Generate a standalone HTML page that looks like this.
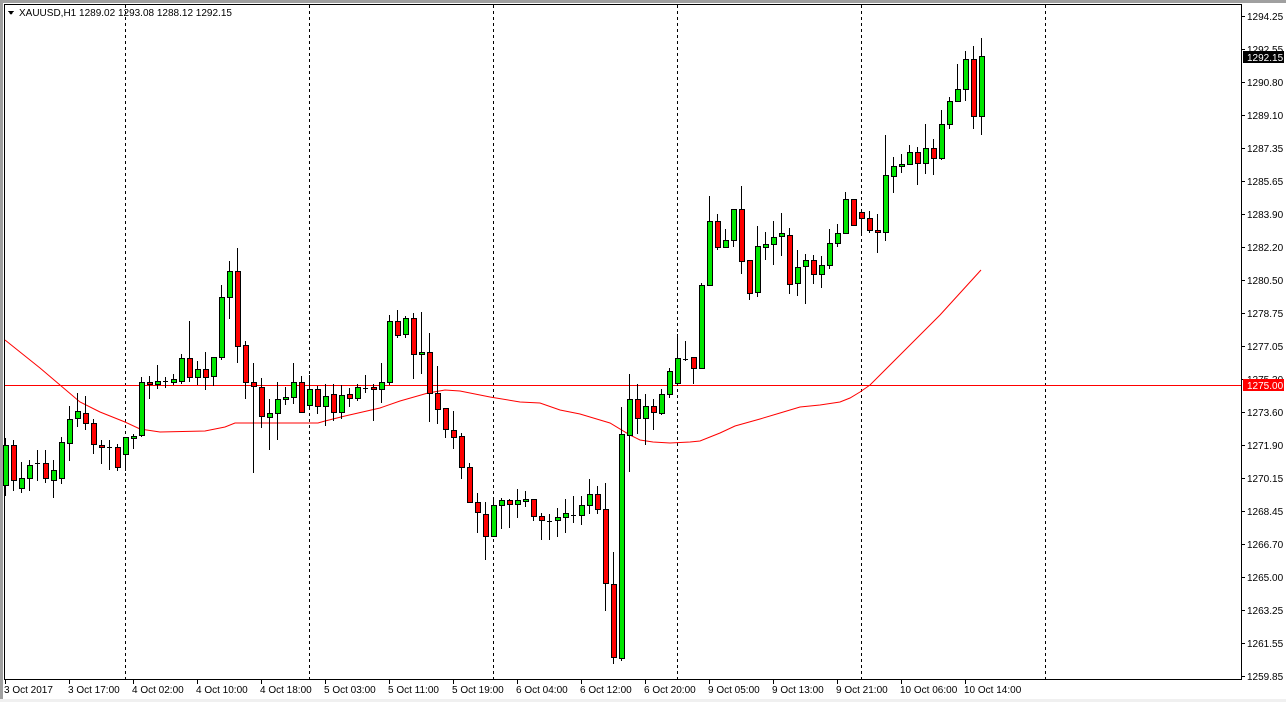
<!DOCTYPE html>
<html><head><meta charset="utf-8">
<style>
html,body{margin:0;padding:0;background:#f0f0f0;}
#c{position:absolute;left:0;top:0;width:1286px;height:702px;}
text{font-family:"Liberation Sans",sans-serif;font-size:10px;fill:#000;}
</style></head>
<body>
<svg id="c" width="1286" height="702" xmlns="http://www.w3.org/2000/svg" shape-rendering="crispEdges">
<rect x="0" y="0" width="1286" height="702" fill="#a0a0a0"/>
<rect x="3" y="3" width="1283" height="697" fill="#fff"/>
<rect x="0" y="699" width="1286" height="3" fill="#f0f0f0"/>
<line x1="4.5" y1="4" x2="4.5" y2="680" stroke="#000"/>
<line x1="4" y1="4.5" x2="1242" y2="4.5" stroke="#000"/>
<line x1="1241.5" y1="4" x2="1241.5" y2="680" stroke="#000"/>
<line x1="4" y1="679.5" x2="1242" y2="679.5" stroke="#000"/>
<g id="grid" stroke="#000" stroke-dasharray="3,3"></g>
<line x1="5" y1="385.5" x2="1241" y2="385.5" stroke="#ff0000"/>
<polyline fill="none" stroke="#ff0000" stroke-width="1" shape-rendering="auto" points="5,340 20,352 40,368 60,385 80,402 100,412 125,422 140,429 160,432 205,431 225,427 235,423 318,423 325,421 345,416 380,408 400,401 428,393 445,390 460,391 490,397 520,402 540,403 560,410 580,414 600,420 610,423 630,435 640,440 653,442 670,443 690,442 700,441 720,433 735,426 760,419 780,413 800,407 820,405 840,402 850,398 860,392 870,385 900,355 940,315 981,270"/>
<g id="candles"></g>
<g id="axis"></g>
<rect x="1243" y="51" width="41" height="12" fill="#000"/>
<text x="1247" y="61" style="fill:#fff">1292.15</text>
<rect x="1243" y="379" width="41" height="12" fill="#ff0000"/>
<text x="1247" y="389" style="fill:#fff">1275.00</text>
<path d="M8 11 L14 11 L11 15 Z" fill="#000"/>
<text x="19" y="16">XAUUSD,H1  1289.02 1293.08 1288.12 1292.15</text>
</svg>
<script>
var NS="http://www.w3.org/2000/svg";
function el(p,n,a,t){var e=document.createElementNS(NS,n);for(var k in a)e.setAttribute(k,a[k]);if(t)e.textContent=t;p.appendChild(e);return e;}
var g=document.getElementById("grid");
[125,309,493,677,861,1045].forEach(function(x){el(g,"line",{x1:x+.5,y1:5,x2:x+.5,y2:679});});
var d=`5 g 445 485 438 495
13 r 445 480 440 490
21 g 478 488 462 492
29 g 465 478 460 490
37 d 463 463 450 480
45 r 463 478 450 482
53 g 470 480 460 497
61 g 442 478 437 483
69 g 419 443 406 460
77 g 411 418 393 426
85 r 413 423 396 429
93 r 423 444 419 453
101 r 445 447 440 463
109 d 447 447 440 469
117 r 447 467 444 470
125 g 437 454 437 470
133 g 436 438 434 448
141 g 382 435 377 436
149 r 382 384 376 398
157 g 381 384 365 388
165 d 381 381 377 387
173 g 379 382 374 384
181 g 358 381 354 383
189 r 358 377 321 381
197 g 369 377 361 384
205 r 369 377 352 389
213 g 357 376 357 385
221 g 297 357 285 359
229 g 271 297 261 318
237 r 271 346 248 362
245 r 345 382 341 398
253 r 382 386 363 472
261 r 387 416 378 427
269 g 413 417 399 449
277 g 399 413 382 439
285 g 397 399 387 404
293 g 382 397 363 403
301 r 382 412 376 412
309 g 389 405 375 409
317 r 389 406 386 413
325 g 396 406 384 425
333 r 394 412 384 420
341 g 395 412 385 418
349 r 394 398 388 406
357 g 387 398 384 400
365 d 388 388 375 392
373 r 387 389 384 420
381 g 382 389 363 402
389 g 321 382 315 384
397 r 321 335 310 337
405 g 318 334 316 337
413 r 318 354 313 378
421 g 352 354 312 373
429 r 352 393 333 421
437 r 393 409 366 423
445 r 408 429 408 437
453 r 430 437 411 448
461 r 436 467 433 478
469 r 467 502 463 502
477 r 502 512 493 532
485 r 514 536 502 559
493 g 505 536 497 536
501 g 500 505 498 528
509 r 500 504 499 527
517 g 500 504 489 517
525 g 499 501 491 506
533 r 499 516 499 520
541 r 516 520 513 539
549 d 521 521 514 539
557 g 517 520 508 536
565 g 513 517 499 532
573 d 515 515 496 522
581 g 505 515 496 524
589 g 494 505 479 513
597 r 494 509 486 513
605 r 509 583 483 610
613 r 584 657 552 663
621 g 434 658 407 660
629 g 399 435 374 471
637 r 399 418 384 433
645 g 406 418 394 444
653 r 406 412 399 429
661 g 394 413 389 414
669 g 371 394 368 397
677 g 358 383 334 385
685 d 359 359 341 360
693 r 357 368 357 383
701 g 285 368 283 368
709 g 221 285 196 285
717 r 221 247 214 249
725 g 240 247 229 247
733 g 209 240 209 246
741 r 209 261 186 273
749 r 260 293 260 299
757 g 246 292 226 296
765 g 244 247 232 259
773 g 237 244 221 264
781 g 233 236 213 255
789 r 235 284 228 293
797 g 267 283 250 295
805 g 260 266 254 303
813 r 260 274 255 283
821 g 265 274 256 287
829 g 243 265 229 268
837 g 233 243 224 246
845 g 199 233 192 233
853 r 199 225 199 225
861 r 212 218 212 234
869 r 218 230 211 232
877 r 230 232 214 252
885 g 175 232 135 240
893 g 166 176 157 192
901 g 164 166 154 172
909 g 152 164 145 164
917 r 152 163 147 184
925 g 148 163 124 173
933 r 148 158 139 174
941 g 124 158 110 159
949 g 101 124 97 128
957 g 89 101 64 101
965 g 59 89 51 100
973 r 59 116 46 128
981 g 56 116 38 134`;
var cg=document.getElementById("candles");
d.split("\n").forEach(function(l){var p=l.trim().split(/\s+/);var x=+p[0],c=p[1],t=+p[2],b=+p[3],h=+p[4],lo=+p[5];
el(cg,"line",{x1:x+.5,y1:h,x2:x+.5,y2:lo+1,stroke:"#000"});
if(c=="d"){el(cg,"line",{x1:x-2,y1:t+.5,x2:x+3,y2:t+.5,stroke:"#000"});}
else{if(b-t<2)b=t+2;el(cg,"rect",{x:x-2+.5,y:t+.5,width:5,height:b-t,fill:c=="g"?"#00e600":"#ff0000",stroke:"#000"});}
});
var ax=document.getElementById("axis");
var pr=[["1294.25",16],["1292.55",49],["1290.80",82],["1289.10",115],["1287.35",148],["1285.65",181],["1283.90",214],["1282.20",247],["1280.50",280],["1278.75",313],["1277.05",346],["1275.30",379],["1273.60",412],["1271.90",445],["1270.15",478],["1268.45",511],["1266.70",544],["1265.00",577],["1263.25",610],["1261.55",643],["1259.85",676]];
pr.forEach(function(p){el(ax,"line",{x1:1241,y1:p[1]+.5,x2:1245,y2:p[1]+.5,stroke:"#000"});el(ax,"text",{x:1247,y:p[1]+4},p[0]);});
var tl=["3 Oct 2017","3 Oct 17:00","4 Oct 02:00","4 Oct 10:00","4 Oct 18:00","5 Oct 03:00","5 Oct 11:00","5 Oct 19:00","6 Oct 04:00","6 Oct 12:00","6 Oct 20:00","9 Oct 05:00","9 Oct 13:00","9 Oct 21:00","10 Oct 06:00","10 Oct 14:00"];
tl.forEach(function(s,i){var x=5+64*i;el(ax,"line",{x1:x+.5,y1:680,x2:x+.5,y2:684,stroke:"#000"});el(ax,"text",{x:x-1,y:693},s);});
</script>
</body></html>
